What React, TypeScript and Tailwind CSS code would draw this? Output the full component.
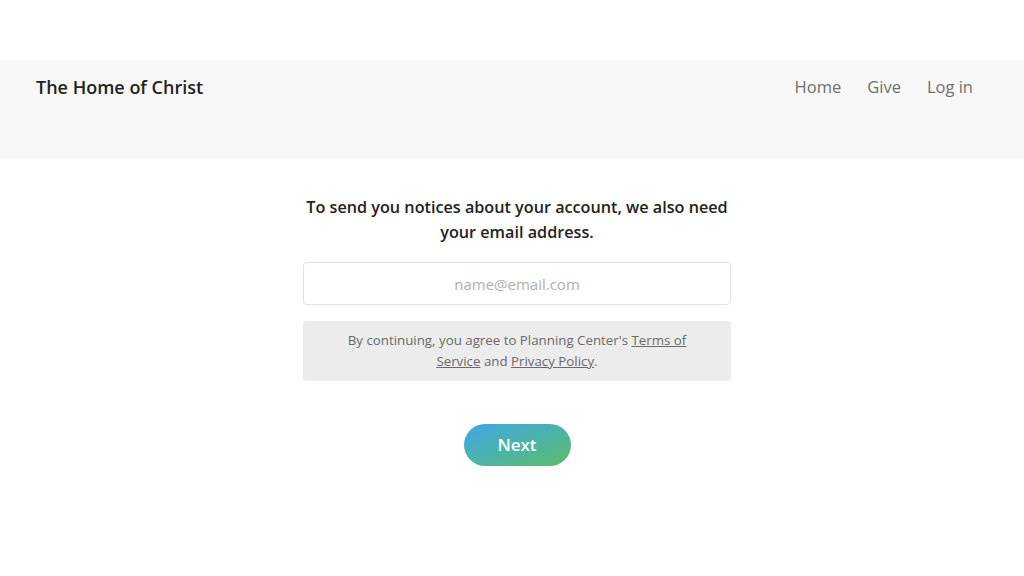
const FONT = { fontFamily: '"Open Sans", "Noto Sans", Arial, sans-serif' };

const NAV = ["Home", "Give", "Log in"];

export default function App() {
  return (
    <div className="min-h-[576px] bg-white pt-[60px] text-[#222]" style={FONT}>
      <header className="flex h-[98px] items-start justify-between border-b border-[#f0f0f0] bg-[#f8f8f8] pl-9 pr-[51px] pt-[14px]">
        <h1 className="text-[18px] font-semibold leading-[26px] text-[#222]">The Home of Christ</h1>
        <nav className="flex gap-[26px] text-[16.5px] leading-[26px] text-[#6f6f6f]">
          {NAV.map((n) => (
            <a key={n} href="#">
              {n}
            </a>
          ))}
        </nav>
      </header>

      <div className="flex justify-center pl-[10px]">
        <main className="flex w-[428px] flex-col items-center pt-[37px]">
          <p className="text-center text-[16.2px] font-semibold leading-[25px] text-[#222]">
            To send you notices about your account, we also need your email address.
          </p>
          <input
            type="email"
            placeholder="name@email.com"
            className="mt-[17px] h-[43px] w-full rounded border border-[#e2e2e2] bg-white text-center text-[15px] text-[#333] placeholder:text-[#b0b0b0] outline-none"
          />
          <div className="mt-[16px] w-full rounded bg-[#ececec] px-10 py-[9px] text-center text-[13.3px] leading-[21px] text-[#6a6a6a]">
            By continuing, you agree to Planning Center's{" "}
            <a href="#" className="underline">
              Terms of Service
            </a>{" "}
            and{" "}
            <a href="#" className="underline">
              Privacy Policy
            </a>
            .
          </div>
          <button className="mt-[43px] h-[42px] w-[107px] rounded-full bg-gradient-to-br from-[#42a5e6] to-[#5dbb62] text-[17px] font-semibold text-white">
            Next
          </button>
        </main>
      </div>
    </div>
  );
}
